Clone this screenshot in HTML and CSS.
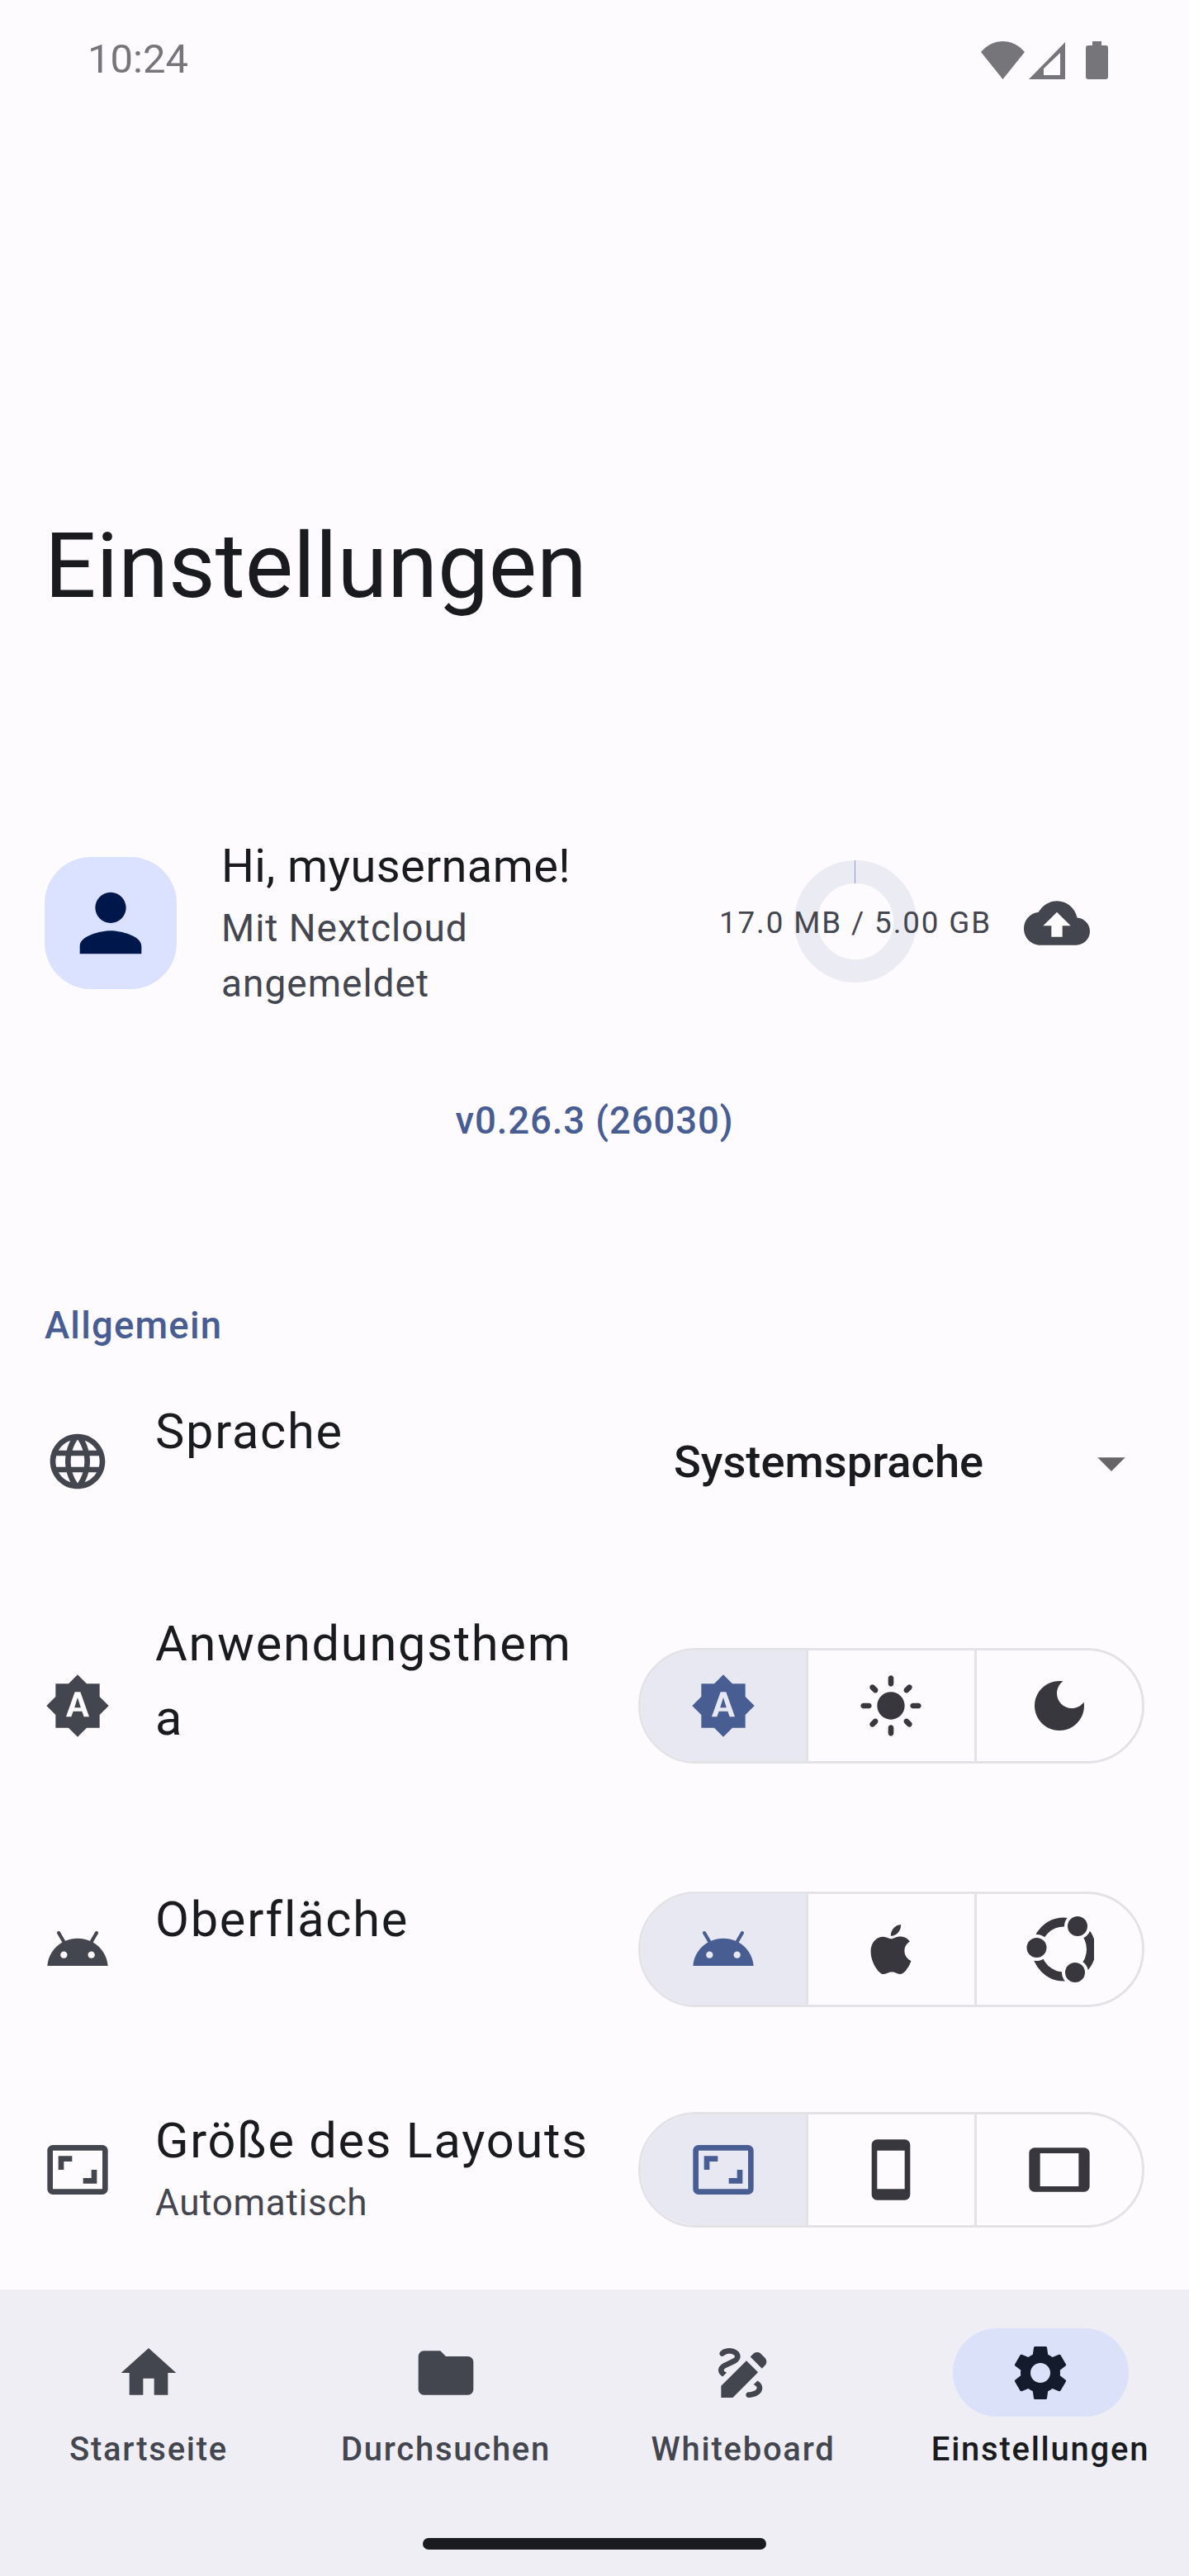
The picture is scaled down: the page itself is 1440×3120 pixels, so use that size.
FILE: index.html
```html
<!doctype html>
<html lang="de">
<head>
    <meta charset="UTF-8">
    <meta name="viewport" content="width=device-width, initial-scale=1.0"/>
    <title>Einstellungen</title>
    <link rel="stylesheet" href="styles.css">
</head>
<body>

<div class="screen">

    <div class="statusbar">
        <span class="clock">10:24</span>
        <div class="status-icons">
            <svg class="st-wifi" viewBox="0 0 53 46"><path d="M26.5 46 0 13C15-4.300 38-4.300 53 13Z"/></svg>
            <svg class="st-signal" viewBox="0 0 44 45"><path fill-rule="evenodd" d="M0 45 44 0V45ZM18 32V40H38V13Z"/></svg>
            <svg class="st-battery" viewBox="0 0 27 46"><path d="M8 0H19V5H24Q27 5 27 8V43Q27 46 24 46H3Q0 46 0 43V8Q0 5 3 5H8Z"/></svg>
        </div>
    </div>

    <main class="settings">
        <h1 class="title">Einstellungen</h1>

        <section class="account">
            <div class="avatar">
                <svg class="icon-avatar" viewBox="0 0 24 24"><path d="M12 12c2.210 0 4-1.790 4-4s-1.790-4-4-4-4 1.790-4 4 1.790 4 4 4zm0 2c-2.670 0-8 1.340-8 4v2h16v-2c0-2.660-5.330-4-8-4z"/></svg>
            </div>
            <div class="account-text">
                <div class="hello">Hi, myusername!</div>
                <div class="signed-in">Mit Nextcloud angemeldet</div>
            </div>
            <div class="storage">
                <div class="ring"></div>
                <span class="storage-text">17.0 MB / 5.00 GB</span>
            </div>
            <svg class="icon cloud" viewBox="0 0 24 24"><path d="M19.350 10.040C18.670 6.590 15.640 4 12 4 9.110 4 6.640 5.640 5.350 8.040 2.340 8.360 0 10.910 0 14c0 3.310 2.690 6 6 6h13c2.760 0 5-2.240 5-5 0-2.640-2.050-4.780-4.650-4.960zM14 13v4h-4v-4H7l5-5 5 5h-3z"/></svg>
        </section>

        <div class="version">v0.26.3 (26030)</div>

        <h2 class="group">Allgemein</h2>

        <div class="row row-lang">
            <svg class="icon" viewBox="0 0 24 24"><path d="M11.990 2C6.470 2 2 6.480 2 12s4.470 10 9.990 10C17.520 22 22 17.520 22 12S17.520 2 11.990 2zm6.930 6h-2.950c-.32-1.250-.78-2.450-1.380-3.560 1.840.63 3.370 1.910 4.330 3.560zM12 4.040c.83 1.200 1.480 2.530 1.910 3.960h-3.820c.43-1.430 1.080-2.760 1.910-3.960zM4.260 14C4.100 13.360 4 12.690 4 12s.1-1.360.26-2h3.380c-.08.66-.14 1.320-.14 2 0 .68.06 1.340.14 2H4.260zm.82 2h2.950c.32 1.250.78 2.450 1.380 3.560-1.840-.63-3.370-1.900-4.330-3.560zm2.950-8H5.080c.96-1.660 2.490-2.930 4.330-3.560C8.810 5.550 8.350 6.750 8.030 8zM12 19.960c-.83-1.200-1.480-2.530-1.910-3.960h3.820c-.43 1.430-1.080 2.760-1.910 3.960zM14.340 14H9.660c-.09-.66-.16-1.320-.16-2 0-.68.07-1.350.16-2h4.680c.09.65.16 1.320.16 2 0 .68-.07 1.340-.16 2zm.25 5.560c.6-1.110 1.060-2.310 1.380-3.560h2.950c-.96 1.650-2.490 2.930-4.330 3.560zM16.360 14c.08-.66.14-1.320.14-2 0-.68-.06-1.340-.14-2h3.380c.16.64.26 1.310.26 2s-.1 1.360-.26 2h-3.380z"/></svg>
            <div class="row-text"><div class="row-title">Sprache</div></div>
            <div class="dropdown">
                <span class="dropdown-value">Systemsprache</span>
                <svg class="caret" viewBox="0 -0.600 24 24"><path d="M7 10l5 5 5-5z"/></svg>
            </div>
        </div>

        <div class="row row-theme">
            <svg class="icon" viewBox="0 0 24 24"><path d="M10.850 12.650h2.300L12 9l-1.150 3.650zM20 8.690V4h-4.690L12 .69 8.690 4H4v4.690L.69 12 4 15.310V20h4.690L12 23.310 15.310 20H20v-4.690L23.310 12 20 8.690zM14.300 16l-.7-2h-3.200l-.7 2H7.800L11 7h2l3.200 9h-1.900z"/></svg>
            <div class="row-text"><div class="row-title">Anwendungsthema</div></div>
            <div class="toggle">
                <div class="cell selected"><svg class="icon" viewBox="0 0 24 24"><path d="M10.850 12.650h2.300L12 9l-1.150 3.650zM20 8.690V4h-4.690L12 .69 8.690 4H4v4.690L.69 12 4 15.310V20h4.690L12 23.310 15.310 20H20v-4.690L23.310 12 20 8.690zM14.300 16l-.7-2h-3.200l-.7 2H7.800L11 7h2l3.200 9h-1.900z"/></svg></div>
                <div class="cell"><svg class="icon" viewBox="0 0 24 24"><path d="M12 7c-2.760 0-5 2.240-5 5s2.240 5 5 5 5-2.240 5-5-2.240-5-5-5zM2 13h2c.55 0 1-.45 1-1s-.45-1-1-1H2c-.55 0-1 .45-1 1s.45 1 1 1zm18 0h2c.55 0 1-.45 1-1s-.45-1-1-1h-2c-.55 0-1 .45-1 1s.45 1 1 1zM11 2v2c0 .55.45 1 1 1s1-.45 1-1V2c0-.55-.45-1-1-1s-1 .45-1 1zm0 18v2c0 .55.45 1 1 1s1-.45 1-1v-2c0-.55-.45-1-1-1s-1 .45-1 1zM5.990 4.580c-.39-.39-1.030-.39-1.410 0-.39.39-.39 1.030 0 1.410l1.060 1.060c.39.39 1.030.39 1.410 0s.39-1.030 0-1.410L5.990 4.580zm12.370 12.370c-.39-.39-1.030-.39-1.410 0-.39.39-.39 1.030 0 1.410l1.060 1.060c.39.39 1.030.39 1.410 0 .39-.39.39-1.030 0-1.410l-1.060-1.060zm1.060-10.960c.39-.39.39-1.030 0-1.410-.39-.39-1.030-.39-1.410 0l-1.060 1.060c-.39.39-.39 1.030 0 1.410s1.030.39 1.410 0l1.060-1.060zM7.050 18.360c.39-.39.39-1.030 0-1.410-.39-.39-1.030-.39-1.410 0l-1.060 1.060c-.39.39-.39 1.030 0 1.410s1.030.39 1.410 0l1.060-1.060z"/></svg></div>
                <div class="cell"><svg class="icon" viewBox="0 0 24 24"><path d="M12 3c-4.970 0-9 4.030-9 9s4.030 9 9 9 9-4.030 9-9c0-.46-.04-.92-.1-1.360-.98 1.370-2.580 2.260-4.400 2.260-2.980 0-5.400-2.420-5.400-5.400 0-1.810.89-3.420 2.260-4.400-.44-.06-.9-.1-1.360-.1z"/></svg></div>
            </div>
        </div>

        <div class="row row-ui">
            <svg class="icon" viewBox="0 0 24 24"><path d="M17.600 9.480l1.840-3.180c.16-.31.04-.69-.26-.85-.29-.15-.65-.06-.83.22l-1.880 3.240c-2.860-1.210-6.080-1.210-8.940 0L5.650 5.670c-.19-.29-.58-.38-.87-.2-.28.18-.37.54-.22.83L6.400 9.480C3.300 11.250 1.280 14.440 1 18h22c-.28-3.560-2.300-6.750-5.400-8.520zM7 15.250c-.69 0-1.250-.56-1.250-1.250s.56-1.250 1.250-1.250 1.250.56 1.250 1.250-.56 1.250-1.250 1.250zm10 0c-.69 0-1.250-.56-1.250-1.250s.56-1.250 1.250-1.250 1.250.56 1.250 1.250-.56 1.250-1.250 1.250z"/></svg>
            <div class="row-text"><div class="row-title">Oberfläche</div></div>
            <div class="toggle">
                <div class="cell selected"><svg class="icon" viewBox="0 0 24 24"><path d="M17.600 9.480l1.840-3.180c.16-.31.04-.69-.26-.85-.29-.15-.65-.06-.83.22l-1.880 3.240c-2.860-1.210-6.080-1.210-8.940 0L5.650 5.670c-.19-.29-.58-.38-.87-.2-.28.18-.37.54-.22.83L6.400 9.480C3.300 11.250 1.280 14.440 1 18h22c-.28-3.560-2.300-6.750-5.400-8.520zM7 15.250c-.69 0-1.250-.56-1.250-1.250s.56-1.250 1.250-1.250 1.250.56 1.250 1.250-.56 1.250-1.250 1.250zm10 0c-.69 0-1.250-.56-1.250-1.250s.56-1.250 1.250-1.250 1.250.56 1.250 1.250-.56 1.250-1.250 1.250z"/></svg></div>
                <div class="cell"><svg class="icon-apple" viewBox="0 0 24 24"><path d="M12.152 6.896c-.948 0-2.415-1.078-3.960-1.040-2.040.027-3.910 1.183-4.961 3.014-2.117 3.675-.546 9.103 1.519 12.090 1.013 1.454 2.208 3.090 3.792 3.039 1.520-.065 2.090-.987 3.935-.987 1.831 0 2.350.987 3.960.948 1.637-.026 2.676-1.480 3.676-2.948 1.156-1.688 1.636-3.325 1.662-3.415-.039-.013-3.182-1.221-3.220-4.857-.026-3.040 2.480-4.494 2.597-4.559-1.429-2.090-3.623-2.324-4.390-2.376-2-.156-3.675 1.090-4.610 1.090zM15.530 3.830c.843-1.012 1.400-2.427 1.245-3.830-1.207.052-2.662.805-3.532 1.818-.78.896-1.454 2.338-1.273 3.714 1.338.104 2.715-.688 3.559-1.701"/></svg></div>
                <div class="cell">
                    <svg class="icon-ubuntu" viewBox="-2 0 84 84">
                        <circle class="hub" cx="45.500" cy="42" r="33"/>
                        <circle class="halo" cx="62" cy="14" r="16"/>
                        <circle class="halo" cx="12.500" cy="40" r="16"/>
                        <circle class="halo" cx="59" cy="70" r="16"/>
                        <circle cx="62" cy="14" r="12"/>
                        <circle cx="12.500" cy="40" r="12"/>
                        <circle cx="59" cy="70" r="12"/>
                    </svg>
                </div>
            </div>
        </div>

        <div class="row row-layout">
            <svg class="icon" viewBox="0 0 24 24"><path d="M19 12h-2v3h-3v2h5v-5zM7 9h3V7H5v5h2V9zm14-6H3c-1.100 0-2 .9-2 2v14c0 1.100.9 2 2 2h18c1.100 0 2-.9 2-2V5c0-1.100-.9-2-2-2zm0 16.010H3V4.990h18v14.020z"/></svg>
            <div class="row-text">
                <div class="row-title">Größe des Layouts</div>
                <div class="row-sub">Automatisch</div>
            </div>
            <div class="toggle">
                <div class="cell selected"><svg class="icon" viewBox="0 0 24 24"><path d="M19 12h-2v3h-3v2h5v-5zM7 9h3V7H5v5h2V9zm14-6H3c-1.100 0-2 .9-2 2v14c0 1.100.9 2 2 2h18c1.100 0 2-.9 2-2V5c0-1.100-.9-2-2-2zm0 16.010H3V4.990h18v14.020z"/></svg></div>
                <div class="cell"><svg class="icon" viewBox="0 0 24 24"><path d="M17 1.010L7 1c-1.100 0-2 .9-2 2v18c0 1.100.9 2 2 2h10c1.100 0 2-.9 2-2V3c0-1.100-.9-1.990-2-1.990zM17 19H7V5h10v14z"/></svg></div>
                <div class="cell"><svg class="icon" viewBox="0 0 24 24"><path d="M21 4H3c-1.100 0-2 .9-2 2v12c0 1.100.89 2 2 2h18c1.100 0 1.990-.9 1.990-2L23 6c0-1.100-.9-2-2-2zm-2 14H5V6h14v12z"/></svg></div>
            </div>
        </div>
    </main>

    <nav class="navbar">
        <div class="nav-items">
            <div class="nav-item">
                <div class="nav-pill"><svg class="icon" viewBox="0 0 24 24"><path d="M10 20v-6h4v6h5v-8h3L12 3 2 12h3v8z"/></svg></div>
                <span class="nav-label">Startseite</span>
            </div>
            <div class="nav-item">
                <div class="nav-pill"><svg class="icon" viewBox="0 0 24 24"><path d="M10 4H4c-1.100 0-1.990.9-1.990 2L2 18c0 1.100.9 2 2 2h16c1.100 0 2-.9 2-2V8c0-1.100-.9-2-2-2h-8l-2-2z"/></svg></div>
                <span class="nav-label">Durchsuchen</span>
            </div>
            <div class="nav-item">
                <div class="nav-pill"><svg class="icon" viewBox="0 0 24 24"><path d="M18.850 10.390l1.060-1.060c.78-.78.78-2.050 0-2.830L18.500 5.090c-.78-.78-2.050-.78-2.830 0l-1.060 1.060 4.240 4.240zm-5.660-2.830L4 16.760V21h4.240l9.190-9.190-4.240-4.250zM19 17.500c0 2.190-2.540 3.500-5 3.500-.55 0-1-.45-1-1s.45-1 1-1c1.540 0 3-.73 3-1.500 0-.47-.48-.87-1.230-1.200l1.480-1.480c1.070.63 1.750 1.470 1.750 2.680zM4.580 13.350C3.610 12.790 3 12.060 3 11c0-1.800 1.890-2.630 3.560-3.360C7.590 7.180 9 6.560 9 6c0-.41-.78-1-2-1-1.260 0-1.800.61-1.830.64-.35.41-.98.46-1.400.12-.41-.34-.49-.95-.15-1.380C3.730 4.240 4.760 3 7 3s4 1.320 4 3c0 1.870-1.930 2.720-3.640 3.470C6.420 9.880 5 10.500 5 11c0 .31.43.6 1.070.86l-1.490 1.490z"/></svg></div>
                <span class="nav-label">Whiteboard</span>
            </div>
            <div class="nav-item active">
                <div class="nav-pill"><svg class="icon" viewBox="0 0 24 24"><path d="M19.140 12.940c.04-.3.06-.61.06-.94 0-.32-.02-.64-.07-.94l2.030-1.580c.18-.14.23-.41.12-.61l-1.920-3.320c-.12-.22-.37-.29-.59-.22l-2.390.96c-.5-.38-1.030-.7-1.620-.94l-.36-2.540c-.04-.24-.24-.41-.48-.41h-3.840c-.24 0-.43.17-.47.41l-.36 2.540c-.59.24-1.130.57-1.620.94l-2.390-.96c-.22-.08-.47 0-.59.22L2.740 8.870c-.12.21-.08.47.12.61l2.030 1.580c-.05.3-.09.63-.09.94s.02.64.07.94l-2.030 1.580c-.18.14-.23.41-.12.61l1.920 3.320c.12.22.37.29.59.22l2.390-.96c.5.38 1.030.7 1.620.94l.36 2.540c.05.24.24.41.48.41h3.840c.24 0 .44-.17.47-.41l.36-2.540c.59-.24 1.130-.56 1.620-.94l2.390.96c.22.08.47 0 .59-.22l1.920-3.320c.12-.22.07-.47-.12-.61l-2.010-1.580zM12 15.600c-1.980 0-3.600-1.620-3.600-3.600s1.620-3.600 3.600-3.600 3.600 1.620 3.600 3.600-1.620 3.600-3.600 3.600z"/></svg></div>
                <span class="nav-label">Einstellungen</span>
            </div>
        </div>
        <div class="home-bar"></div>
    </nav>

</div>

</body>
</html>
```

FILE: styles.css
```css
body{
    margin:0;
    padding:0;
    background:#fefbff;
    font-family:Roboto,"Noto Sans",sans-serif;
    color:#1a1b1f;
}
.screen{
    width:1440px;
    height:3120px;
    display:flex;
    flex-direction:column;
    overflow:hidden;
}

/* status bar */
.statusbar{
    height:144px;
    flex:none;
    box-sizing:border-box;
    padding:0 98px 0 106px;
    display:flex;
    justify-content:space-between;
    align-items:flex-start;
    color:#76767a;
}
.clock{
    font-size:49px;
    line-height:70px;
    margin-top:37px;
}
.status-icons{
    display:flex;
    align-items:flex-start;
    margin-top:50px;
    fill:#76767a;
}
.st-wifi{
    width:53px;
    height:46px;
}
.st-signal{
    width:44px;
    height:45px;
    margin-left:5px;
    margin-top:1px;
}
.st-battery{
    width:27px;
    height:46px;
    margin-left:25px;
}

/* content */
.settings{
    flex:1;
    min-height:0;
    overflow:hidden;
}
.title{
    margin:470px 54px 0;
    font-size:110px;
    line-height:144px;
    font-weight:400;
}
.icon{
    width:80px;
    height:80px;
    flex:none;
    fill:#44464f;
}

.account{
    display:flex;
    align-items:center;
    margin:252px 0 0 54px;
}
.avatar{
    width:160px;
    height:160px;
    flex:none;
    border-radius:56px;
    background:#dae2ff;
    display:flex;
    align-items:center;
    justify-content:center;
}
.icon-avatar{
    width:112px;
    height:112px;
    fill:#00174b;
}
.account-text{
    width:520px;
    flex:none;
    margin-left:54px;
}
.hello{
    font-size:56px;
    line-height:79px;
    letter-spacing:.4px;
}
.signed-in{
    font-size:46px;
    line-height:67px;
    letter-spacing:1px;
    color:#44464f;
    margin-top:2px;
}
.storage{
    position:relative;
    width:322px;
    flex:none;
    margin-left:87px;
    display:flex;
    justify-content:center;
}
.ring{
    position:absolute;
    left:87px;
    top:-48px;
    width:148px;
    height:148px;
    box-sizing:border-box;
    border:28px solid #ebecf3;
    border-radius:50%;
}
.ring:after{
    content:"";
    position:absolute;
    left:45px;
    top:-28px;
    width:1px;
    height:28px;
    background:#8d9bc4;
}
.storage-text{
    position:relative;
    font-size:36.75px;
    line-height:56px;
    letter-spacing:1.9px;
    color:#44464f;
    white-space:nowrap;
}
.cloud{
    margin-left:43px;
}

.version{
    margin-top:98px;
    text-align:center;
    font-size:45.5px;
    line-height:70px;
    font-weight:500;
    color:#485d92;
    letter-spacing:.9px;
}
.group{
    margin:178px 54px 0;
    font-size:45.5px;
    line-height:70px;
    font-weight:500;
    color:#485d92;
    letter-spacing:1.2px;
}

/* rows */
.row{
    display:flex;
    align-items:center;
    padding:0 54px;
}
.row-lang{
    margin-top:48px;
}
.row-theme{
    margin-top:95px;
}
.row-ui{
    margin-top:94px;
}
.row-layout{
    margin-top:106px;
}
.row-text{
    width:532px;
    flex:none;
    margin-left:54px;
    padding-bottom:72px;
}
.row-theme .row-text{
    padding-bottom:60px;
}
.row-layout .row-text{
    padding-bottom:10px;
}
.row-title{
    font-size:59.5px;
    line-height:90px;
    letter-spacing:1.75px;
    overflow-wrap:anywhere;
}
.row-sub{
    font-size:44px;
    line-height:60px;
    letter-spacing:.7px;
    color:#44464f;
}
.dropdown{
    margin-left:96px;
    flex:1;
    display:flex;
    align-items:center;
    justify-content:space-between;
}
.dropdown-value{
    font-size:54.25px;
    font-weight:500;
}
.caret{
    width:80px;
    height:80px;
    fill:#666666;
}

.toggle{
    margin-left:auto;
    width:613px;
    height:140px;
    flex:none;
    box-sizing:border-box;
    border:3.5px solid #e3e2e6;
    border-radius:70px;
    display:flex;
    overflow:hidden;
}
.cell{
    flex:1;
    display:flex;
    align-items:center;
    justify-content:center;
    border-left:3.5px solid #e3e2e6;
}
.cell:first-child{
    border-left:0;
}
.cell .icon,.icon-apple,.icon-ubuntu{
    fill:#38373d;
}
.cell.selected{
    background:#e7e8f1;
}
.cell.selected .icon{
    fill:#485d92;
}
.icon-apple{
    width:60px;
    height:60px;
}
.icon-ubuntu{
    width:84px;
    height:84px;
}
.hub{
    fill:none;
    stroke:#38373d;
    stroke-width:11;
}
.icon-ubuntu .halo{
    fill:#fefbff;
}

/* bottom navigation */
.navbar{
    height:347px;
    flex:none;
    background:#eeeef4;
    display:flex;
    flex-direction:column;
    align-items:center;
}
.nav-items{
    width:100%;
    display:flex;
    padding-top:47px;
}
.nav-item{
    flex:1;
    display:flex;
    flex-direction:column;
    align-items:center;
}
.nav-pill{
    width:213px;
    height:107px;
    border-radius:54px;
    display:flex;
    align-items:center;
    justify-content:center;
}
.nav-label{
    margin-top:12px;
    font-size:40px;
    line-height:56px;
    font-weight:500;
    letter-spacing:1.75px;
    color:#44464f;
    white-space:nowrap;
}
.active .nav-pill{
    background:#dbe1f9;
}
.active .icon{
    fill:#141b2c;
}
.active .nav-label{
    color:#1a1b1f;
}
.home-bar{
    width:416px;
    height:14px;
    margin-top:79px;
    border-radius:7px;
    background:#1a1b1f;
}
```
